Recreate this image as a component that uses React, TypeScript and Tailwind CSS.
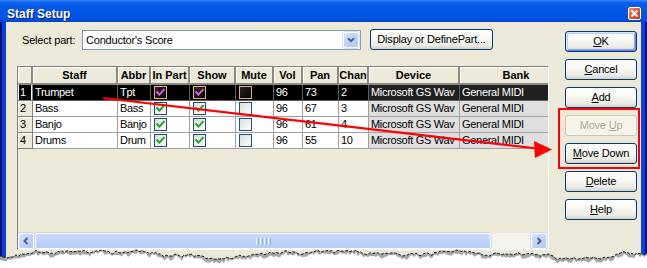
import React from 'react';

type RowData = {
  n: number;
  staff: string;
  abbr: string;
  inPart: boolean;
  show: boolean;
  mute: boolean;
  vol: number;
  pan: number;
  chan: number;
};

const rows: RowData[] = [
  { n: 1, staff: 'Trumpet', abbr: 'Tpt', inPart: true, show: true, mute: false, vol: 96, pan: 73, chan: 2 },
  { n: 2, staff: 'Bass', abbr: 'Bass', inPart: true, show: true, mute: false, vol: 96, pan: 67, chan: 3 },
  { n: 3, staff: 'Banjo', abbr: 'Banjo', inPart: true, show: true, mute: false, vol: 96, pan: 61, chan: 4 },
  { n: 4, staff: 'Drums', abbr: 'Drum', inPart: true, show: true, mute: false, vol: 96, pan: 55, chan: 10 },
];

const headers: { label: string; w: string }[] = [
  { label: '', w: 'w-[15px]' },
  { label: 'Staff', w: 'w-[85px]' },
  { label: 'Abbr', w: 'w-[33px]' },
  { label: 'In Part', w: 'w-[39px]' },
  { label: 'Show', w: 'w-[46px]' },
  { label: 'Mute', w: 'w-[38px]' },
  { label: 'Vol', w: 'w-[29px]' },
  { label: 'Pan', w: 'w-[36px]' },
  { label: 'Chan', w: 'w-[30px]' },
  { label: 'Device', w: 'w-[91px]' },
  { label: 'Bank', w: 'w-[114px]' },
];

function CheckBox({ checked, inv }: { checked: boolean; inv?: boolean }) {
  const border = inv ? '#e3ae7f' : '#1c5180';
  const chk = inv ? '#de5ede' : '#21a121';
  const id = inv ? 'cbInv' : 'cbNorm';
  return (
    <svg width="13" height="13" viewBox="0 0 13 13" className="block shrink-0">
      <defs>
        <linearGradient id={id} x1="0" y1="0" x2="1" y2="1">
          <stop offset="0" stopColor={inv ? '#2a2a30' : '#dcdcd7'} />
          <stop offset="1" stopColor={inv ? '#000000' : '#ffffff'} />
        </linearGradient>
      </defs>
      <rect x="0.5" y="0.5" width="12" height="12" fill={`url(#${id})`} stroke={border} />
      {checked && (
        <path d="M3.2 6.2 L5.4 8.6 L9.8 3.9" stroke={chk} strokeWidth="2" fill="none" strokeLinecap="square" />
      )}
    </svg>
  );
}

function Cell({
  w,
  sel,
  gray,
  children,
  cb,
}: {
  w: string;
  sel: boolean;
  gray?: boolean;
  children?: React.ReactNode;
  cb?: boolean;
}) {
  const bg = gray ? (sel ? 'bg-[#202020]' : 'bg-[#dfdfdf]') : sel ? 'bg-black' : 'bg-white';
  const bc = sel ? 'border-[#5f5f5f]' : 'border-[#a0a0a0]';
  const txt = sel ? 'text-white' : 'text-black';
  const pad = cb ? 'pl-[3px]' : 'pl-[2px]';
  return (
    <div
      className={`${w} h-full shrink-0 border-r border-b ${bc} ${bg} ${txt} ${pad} flex items-center overflow-hidden whitespace-nowrap text-[11px] tracking-[-0.3px]`}
    >
      {children}
    </div>
  );
}

function GridRow({ r }: { r: RowData }) {
  const sel = r.n === 1;
  return (
    <div className="flex h-[16px] shrink-0">
      {sel ? (
        <div className="w-[15px] h-full shrink-0 border-r border-b border-[#808080] bg-black text-white pl-[2px] flex items-center text-[11px] shadow-[inset_1px_0_0_#fff,inset_-1px_0_0_#fff]">
          {r.n}
        </div>
      ) : (
        <div className="w-[15px] h-full shrink-0 border-r border-b border-[#808080] bg-[#ece9d8] text-black pl-[2px] flex items-center text-[11px] shadow-[inset_1px_1px_0_#fff]">
          {r.n}
        </div>
      )}
      <Cell w="w-[85px]" sel={sel}>{r.staff}</Cell>
      <Cell w="w-[33px]" sel={sel}>{r.abbr}</Cell>
      <Cell w="w-[39px]" sel={sel} cb>
        <CheckBox checked={r.inPart} inv={sel} />
      </Cell>
      <Cell w="w-[46px]" sel={sel} cb>
        <CheckBox checked={r.show} inv={sel} />
      </Cell>
      <Cell w="w-[38px]" sel={sel} cb>
        <CheckBox checked={r.mute} inv={sel} />
      </Cell>
      <Cell w="w-[29px]" sel={sel}>{r.vol}</Cell>
      <Cell w="w-[36px]" sel={sel}>{r.pan}</Cell>
      <Cell w="w-[30px]" sel={sel}>{r.chan}</Cell>
      <Cell w="w-[91px]" sel={sel} gray>Microsoft GS Wav</Cell>
      <Cell w="w-[114px]" sel={sel} gray>General MIDI</Cell>
    </div>
  );
}

function ScrollArrow({ dir }: { dir: 'left' | 'right' }) {
  return (
    <div className="w-[16px] h-[16px] shrink-0 rounded-[2px] border border-white bg-[linear-gradient(135deg,#d6e2fd_0%,#c1d3fb_50%,#b3c8f7_100%)] shadow-[0_0_0_0.5px_#aac0f0] flex items-center justify-center">
      <svg width="8" height="8" viewBox="0 0 8 8">
        {dir === 'left' ? (
          <path d="M5.5 1 L2.5 4 L5.5 7" stroke="#4d6185" strokeWidth="2" fill="none" />
        ) : (
          <path d="M2.5 1 L5.5 4 L2.5 7" stroke="#4d6185" strokeWidth="2" fill="none" />
        )}
      </svg>
    </div>
  );
}

function ScrollBar() {
  return (
    <div className="h-[16px] shrink-0 flex bg-[#f4f3ee]">
      <ScrollArrow dir="left" />
      <div className="ml-[1px] w-[456px] h-[16px] shrink-0 rounded-[2px] border border-white bg-[linear-gradient(180deg,#cddcfc_0%,#c1d3fb_50%,#b8cbf8_100%)] shadow-[0_0_0_0.5px_#aac0f0] flex items-center justify-center gap-[1px]">
        <span className="w-[1px] h-[7px] bg-white" />
        <span className="w-[1px] h-[7px] bg-[#8cabef]" />
        <span className="w-[1px] h-[7px] bg-white" />
        <span className="w-[1px] h-[7px] bg-[#8cabef]" />
        <span className="w-[1px] h-[7px] bg-white" />
        <span className="w-[1px] h-[7px] bg-[#8cabef]" />
        <span className="w-[1px] h-[7px] bg-white" />
        <span className="w-[1px] h-[7px] bg-[#8cabef]" />
      </div>
      <div className="flex-1" />
      <ScrollArrow dir="right" />
      <div className="w-[1px] shrink-0" />
    </div>
  );
}

function XPButton({
  children,
  disabled,
  def,
  w,
}: {
  children: React.ReactNode;
  disabled?: boolean;
  def?: boolean;
  w: string;
}) {
  if (disabled) {
    return (
      <div
        className={`${w} h-[21px] shrink-0 rounded-[3px] border border-[#c9c7ba] bg-[#f5f4ea] text-[#aca899] flex items-center justify-center text-[11px] tracking-[-0.2px]`}
      >
        {children}
      </div>
    );
  }
  return (
    <div
      className={`${w} h-[21px] shrink-0 rounded-[3px] border border-[#003c74] bg-[linear-gradient(180deg,#ffffff_0%,#f7f7f3_45%,#ecebe5_80%,#d6d0c5_100%)] text-black flex items-center justify-center text-[11px] tracking-[-0.2px] ${
        def
          ? 'shadow-[inset_1px_1px_0_#cee7ff,inset_-1px_-1px_0_#6982ee,inset_2px_2px_0_#bcd4f6,inset_-2px_-2px_0_#89ade4]'
          : ''
      }`}
    >
      {children}
    </div>
  );
}

function makeTear() {
  let s = 987654;
  const r = () => {
    s = (s * 16807) % 2147483647;
    return s / 2147483647;
  };
  const line: [number, number][] = [];
  let base = 255;
  for (let x = -2; x <= 652; x += 2) {
    base += (r() - 0.5) * 2.6;
    base = Math.max(250.5, Math.min(259, base));
    const y = base + (r() - 0.5) * 1.6;
    line.push([x, y]);
  }
  const lineStr = line.map(([x, y]) => `${x},${y.toFixed(1)}`).join(' ');
  const white = `${lineStr} 652,270 -2,270`;
  const shadowBottom = [...line]
    .reverse()
    .map(([x, y]) => `${x},${(y + 1 + r() * 3.5).toFixed(1)}`)
    .join(' ');
  const shadow = `${lineStr} ${shadowBottom}`;
  return { lineStr, white, shadow };
}

const tear = makeTear();

export default function App() {
  return (
    <div className="relative w-[647px] h-[268px] overflow-hidden bg-white font-['Liberation_Sans',Arial,sans-serif]">
      <div className="flex flex-col w-[647px] h-[268px]">
        {/* Title bar */}
        <div className="h-[22px] shrink-0 flex bg-[linear-gradient(180deg,#3d8df5_0%,#0a5fec_12%,#0056e6_50%,#0053e1_85%,#0046d0_100%)]">
          <span className="self-start pl-[7px] mt-[8px] leading-[12px] text-[12px] font-bold text-white [text-shadow:1px_1px_0_#0a1883]">
            Staff Setup
          </span>
          <div className="ml-auto mr-[6px] mt-[7px] w-[13px] h-[13px] rounded-[2px] border border-white bg-[linear-gradient(135deg,#f0906e_0%,#e0582f_50%,#c2391a_100%)] flex items-center justify-center">
            <svg width="9" height="9" viewBox="0 0 9 9">
              <path d="M1.5 1.5 L7.5 7.5 M7.5 1.5 L1.5 7.5" stroke="#fff" strokeWidth="1.8" />
            </svg>
          </div>
        </div>

        {/* Frame + body */}
        <div className="flex flex-1">
          <div className="w-[6px] shrink-0 border-l-2 border-[#001070] bg-[#0a3fe0]" />
          <div className="flex-1 bg-[#ece9d8] flex pl-[11px] pt-[7px]">
            {/* Left column */}
            <div className="w-[532px] shrink-0 flex flex-col">
              <div className="h-[21px] flex items-end">
                <div className="ml-[5px] w-[60px] h-[20px] flex items-center text-[11px] tracking-[-0.2px] text-black">
                  Select part:
                </div>
                <div className="w-[279px] h-[20px] border border-[#7f9db9] bg-white flex items-center">
                  <span className="flex-1 pl-[3px] text-[11px] tracking-[-0.2px] text-black whitespace-nowrap">
                    Conductor's Score
                  </span>
                  <div className="w-[16px] h-[16px] mr-[1px] rounded-[2px] border border-white bg-[linear-gradient(135deg,#d6e2fd_0%,#c1d3fb_50%,#b1c6f6_100%)] shadow-[0_0_0_0.5px_#b0c4f0] flex items-center justify-center">
                    <svg width="8" height="6" viewBox="0 0 8 6">
                      <path d="M1 1.2 L4 4.2 L7 1.2" stroke="#4d6185" strokeWidth="2" fill="none" />
                    </svg>
                  </div>
                </div>
                <div className="ml-[9px]">
                  <XPButton w="w-[123px]">Display or DefinePart...</XPButton>
                </div>
              </div>

              {/* Grid */}
              <div className="mt-[16px] w-[532px] h-[184px] border border-t-[#808080] border-l-[#808080] border-r-white border-b-white bg-[#ece9d8] flex flex-col overflow-hidden">
                <div className="flex-1 overflow-hidden">
                  <div className="flex h-[18px]">
                    {headers.map((h, i) => (
                      <div
                        key={i}
                        className={`${h.w} h-full shrink-0 border-r-2 border-b-2 border-[#8c8a82] bg-[#ece9d8] shadow-[inset_1px_1px_0_#fff] flex items-center justify-center overflow-hidden whitespace-nowrap text-[11px] font-bold text-black`}
                      >
                        {h.label}
                      </div>
                    ))}
                  </div>
                  {rows.map((r) => (
                    <GridRow key={r.n} r={r} />
                  ))}
                </div>
                <ScrollBar />
              </div>
            </div>

            {/* Right button column */}
            <div className="ml-[16px] mt-[2px] w-[72px] flex flex-col gap-[7px]">
              <XPButton w="w-[72px]" def>
                <span>
                  <u>O</u>K
                </span>
              </XPButton>
              <XPButton w="w-[72px]">
                <span>
                  <u>C</u>ancel
                </span>
              </XPButton>
              <XPButton w="w-[72px]">
                <span>
                  <u>A</u>dd
                </span>
              </XPButton>
              <XPButton w="w-[72px]" disabled>
                <span>
                  Move <u>U</u>p
                </span>
              </XPButton>
              <XPButton w="w-[72px]">
                <span>
                  <u>M</u>ove Down
                </span>
              </XPButton>
              <XPButton w="w-[72px]">
                <span>
                  <u>D</u>elete
                </span>
              </XPButton>
              <XPButton w="w-[72px]">
                <span>
                  <u>H</u>elp
                </span>
              </XPButton>
            </div>
          </div>
          <div className="w-[6px] shrink-0 border-r-2 border-[#001070] bg-[#0a3fe0]" />
        </div>
      </div>

      {/* Annotation overlay: red arrow and highlight box */}
      <svg className="absolute left-0 top-0 pointer-events-none" width="647" height="268" viewBox="0 0 647 268">
        <line x1="103" y1="98" x2="537" y2="148.5" stroke="#ff0000" strokeWidth="2.2" />
        <polygon points="534,141 552,149.5 535,158" fill="#ff0000" />
        <rect x="559" y="109" width="80" height="59" fill="none" stroke="#ff0000" strokeWidth="2" />
      </svg>

      {/* Torn paper edge */}
      <svg className="absolute left-0 top-0 pointer-events-none" width="647" height="268" viewBox="0 0 647 268">
        <polygon points={tear.white} fill="#ffffff" />
        <polygon points={tear.shadow} fill="#8a8a8a" opacity="0.75" />
        <polyline points={tear.lineStr} fill="none" stroke="#1a1a1a" strokeWidth="1" strokeDasharray="3 1.5" />
      </svg>
    </div>
  );
}
